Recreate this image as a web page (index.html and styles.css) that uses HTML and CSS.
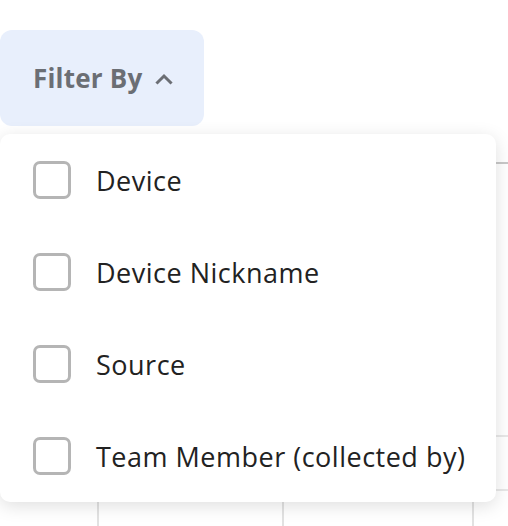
FILE: index.html
```html
<!DOCTYPE html>
<html>
<head>
<meta charset="utf-8">
<link rel="stylesheet" href="styles.css">
</head>
<body>
<div class="page">
  <button class="filter-btn" type="button">
    <span class="filter-label">Filter By</span>
    <svg class="chevron" width="18" height="12" viewBox="0 0 18 12"><path d="M2.5 9.5 L9 3 L15.5 9.5" fill="none" stroke="#6b6e74" stroke-width="3" stroke-linecap="square"/></svg>
  </button>
  <div class="table">
    <div class="col c1"></div>
    <div class="col c2"></div>
    <div class="col c3"></div>
    <div class="col c4"></div>
  </div>
  <div class="menu">
    <label class="item"><span class="box"></span><span class="text">Device</span></label>
    <label class="item"><span class="box"></span><span class="text">Device Nickname</span></label>
    <label class="item"><span class="box"></span><span class="text">Source</span></label>
    <label class="item"><span class="box"></span><span class="text">Team Member (collected by)</span></label>
  </div>
</div>
</body>
</html>
```
FILE: styles.css
```css
html, body {
  margin: 0;
  padding: 0;
  background: #fff;
  overflow: hidden;
}
.page {
  position: relative;
  width: 508px;
  height: 526px;
  padding-top: 30px;
  box-sizing: border-box;
  font-family: "Open Sans", "Liberation Sans", sans-serif;
}
.filter-btn {
  display: flex;
  align-items: center;
  gap: 13px;
  width: 204px;
  height: 96px;
  padding: 0 0 0 33px;
  border: none;
  border-radius: 12px;
  background: #e8effc;
  font-family: inherit;
  cursor: pointer;
}
.filter-label {
  font-size: 26px;
  font-weight: 700;
  color: #6b6e74;
  letter-spacing: 0.2px;
}
.chevron { margin-top: 2px; }
.table {
  display: grid;
  grid-template-columns: 99px 185px 190px 1fr;
  margin-top: 36px;
  height: 364px;
  border-top: 2px solid #c8c8c8;
  background:
    linear-gradient(#e8e8e8, #e8e8e8) 0 271px / 100% 2px no-repeat,
    linear-gradient(#e8e8e8, #e8e8e8) 0 325px / 100% 2px no-repeat;
}
.col { border-right: 2px solid #e2e2e2; }
.c4 { border-right: none; }
.menu {
  position: absolute;
  top: 134px;
  left: 0;
  width: 496px;
  display: flex;
  flex-direction: column;
  background: #fff;
  border-radius: 10px;
  box-shadow: 0 4px 18px rgba(0,0,0,0.13);
}
.item {
  display: flex;
  align-items: center;
  gap: 25px;
  height: 92px;
  padding-left: 33px;
}
.box {
  width: 38px;
  height: 38px;
  box-sizing: border-box;
  border: 3px solid #b5b5b5;
  border-radius: 7px;
  flex: none;
}
.text {
  font-size: 27px;
  letter-spacing: 0.5px;
  color: #222;
}
```
